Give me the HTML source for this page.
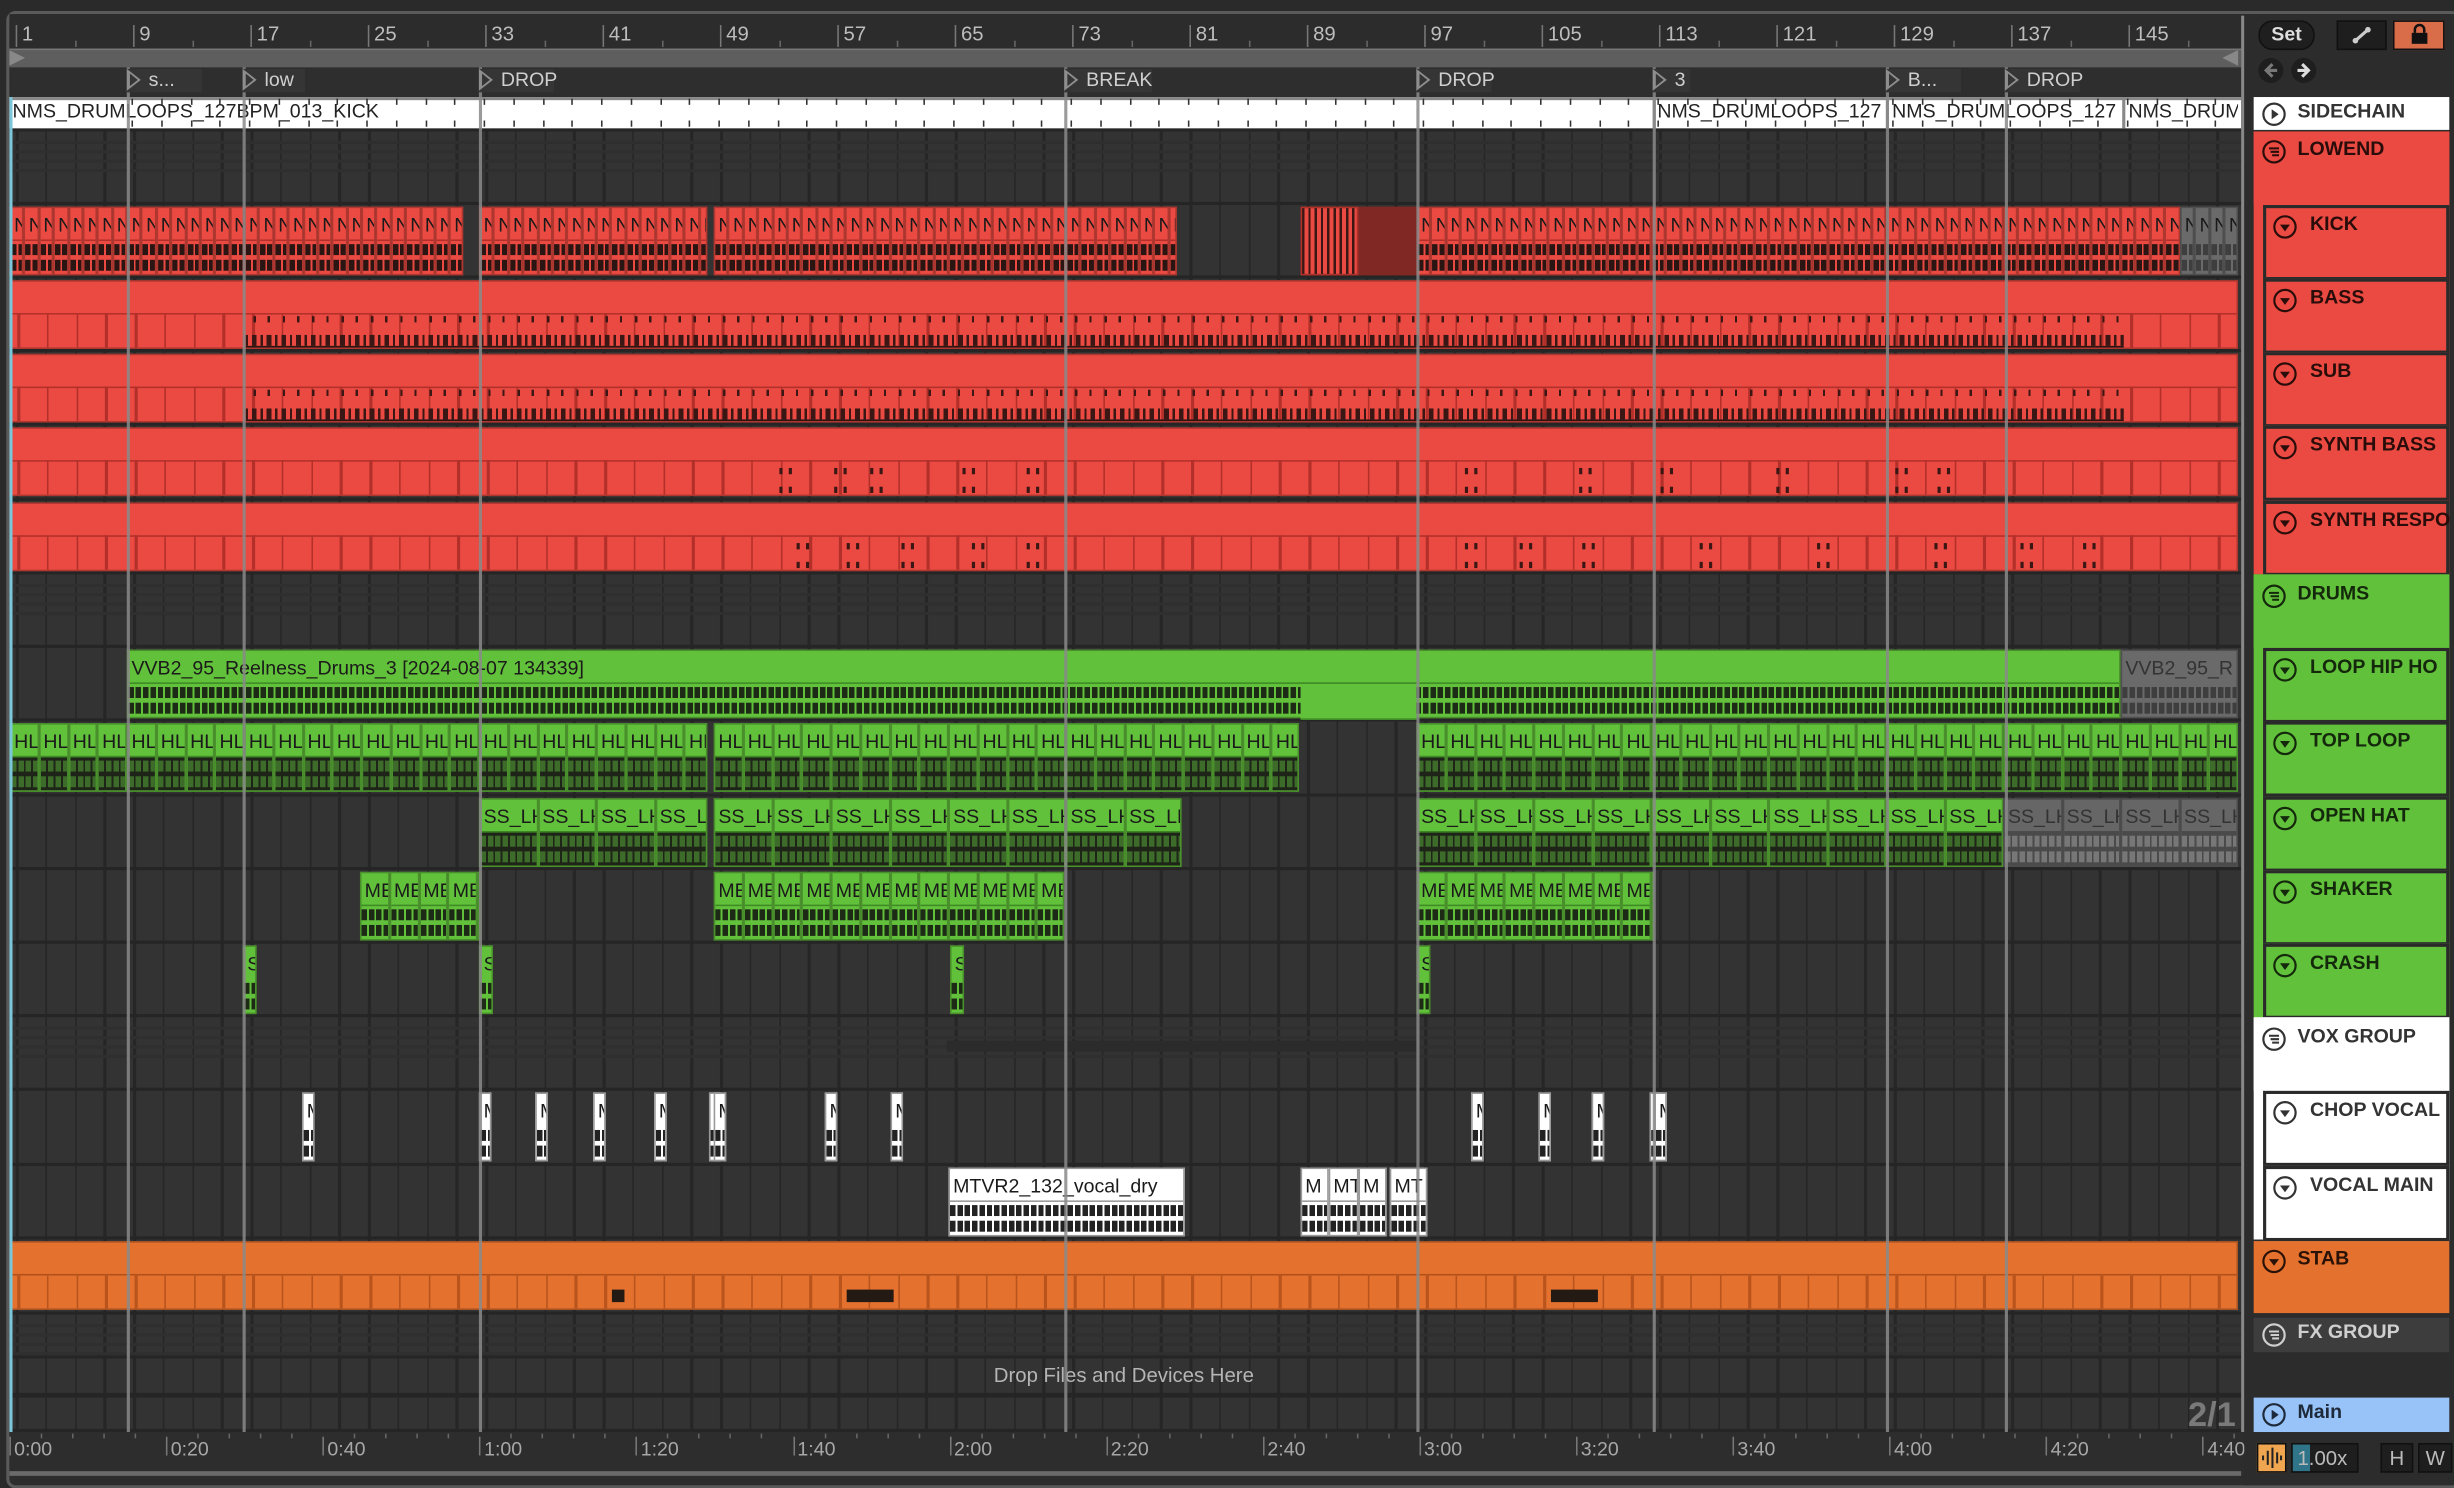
<!DOCTYPE html>
<html><head><meta charset="utf-8">
<style>
html,body{margin:0;padding:0;background:#1f1f1f;overflow:hidden;width:2454px;height:1488px}
#w{position:absolute;left:0;top:0;width:1568px;height:951px;transform:scale(1.56505);transform-origin:0 0;background:#2a2a2a;font-family:"Liberation Sans",sans-serif;overflow:hidden}
.a{position:absolute}
.t{font-family:"Liberation Sans",sans-serif;font-size:12.5px;white-space:nowrap;overflow:hidden}
.hd{font-weight:bold;font-size:12.5px;color:#2a0d0a;white-space:nowrap}
</style></head><body>
<div id="w">
  <div class="a" style="left:4px;top:7px;width:1564px;height:940px;border:2px solid #5a5a5a;border-radius:6px;background:#2d2d2d"></div>
  <div class="a" style="left:6px;top:9px;width:1428px;height:22px;background:#2c2c2c"></div>
  <div class="a" style="left:6px;top:31px;width:1426px;height:11px;background:#5e5e5e;border-top:1px solid #777;border-bottom:1px solid #777"></div>
  <div class="a" style="left:6px;top:43px;width:1426px;height:18px;background:#2e2e2e"></div>
  <div id="arr" class="a" style="left:6px;top:62px;width:1426px;height:853px;background:#333"></div>
  <div id="g" class="a" style="left:0;top:0;width:1568px;height:951px"></div>
  <div class="a" style="left:1434px;top:9px;width:134px;height:940px;background:#2c2c2c"></div>
  <div id="rp" class="a" style="left:0;top:0;width:1568px;height:951px"></div>
</div>
<script>
const g=document.getElementById('g'),rp=document.getElementById('rp');
function el(p,css,html){const d=document.createElement('div');d.className='a';d.style.cssText=css;if(html!==undefined)d.innerHTML=html;p.appendChild(d);return d;}
const X=b=>10+(b-1)*9.375;
for(let x=10;x<1432;x+=18.75){el(g,`left:${x}px;top:84px;width:1.5px;height:831px;background:#262626`);}
for(let b=1;b<=145;b+=8){const x=X(b);el(g,`left:${x}px;top:16px;width:1px;height:14px;background:#777`);el(g,`left:${x+4}px;top:14px;color:#bdbdbd;font-size:13px`,b).className='a t';
 el(g,`left:${x+37.5}px;top:26px;width:1px;height:4px;background:#666`);}
el(g,`left:6px;top:32px;width:0;height:0;border-left:10px solid #888;border-top:5px solid transparent;border-bottom:5px solid transparent`);
el(g,`left:1420px;top:32px;width:0;height:0;border-right:10px solid #888;border-top:5px solid transparent;border-bottom:5px solid transparent`);
const R={lowend:84,kick:131,bass:178,sub:225,sb:272,sr:320,drums:367,loop:414,top:461,open:509,shaker:556,crash:603,vox:650,chop:697,vmain:745,stab:792,fx:840};
for(const k in R){el(g,`left:6px;top:${R[k]-2}px;width:1426px;height:2px;background:#252525`);}
el(g,`left:6px;top:866px;width:1426px;height:2px;background:#252525`);
el(g,`left:6px;top:890px;width:1426px;height:3px;background:#252525`);
el(g,`left:6px;top:913px;width:1426px;height:2px;background:#252525`);
[[84,40],[367,40],[650,40],[840,22]].forEach(([y,h])=>{for(let i=0;i<4;i++)el(g,`left:6px;top:${y+6+i*6}px;width:1426px;height:2px;background:#2f2f2f`);});
el(g,`left:605px;top:665px;width:300px;height:7px;background:#2b2b2b`);
el(g,`left:6px;top:62px;width:1426px;height:20px;background:#fff;border-top:2px solid #888;box-sizing:border-box`);
for(let x=10;x<1432;x+=18.75){el(g,`left:${x+74}px;top:63px;width:1px;height:4px;background:#333`);el(g,`left:${x+74}px;top:77px;width:1px;height:4px;background:#333`);}
[['NMS_DRUMLOOPS_127BPM_013_KICK',8,300],['NMS_DRUMLOOPS_127',1059,145],['NMS_DRUMLOOPS_127',1209,145],['NMS_DRUM',1360,70]].forEach(([s,x,w])=>{const d=el(g,`left:${x}px;top:64px;color:#222;font-size:12.5px;width:${w}px`,s);d.className='a t';});
[1056,1205,1356].forEach(x=>el(g,`left:${x}px;top:62px;width:1.5px;height:20px;background:#888`));

function wave(p,y,h,col){
  el(p,`left:0;top:${y+h*0.12}px;right:0;height:${h*0.3}px;background:repeating-linear-gradient(90deg,${col} 0 3.5px,transparent 3.5px 4.7px)`);
  el(p,`left:0;top:${y+h*0.55}px;right:0;height:${h*0.3}px;background:repeating-linear-gradient(90deg,${col} 0 3.5px,transparent 3.5px 4.7px)`);
}
function clip(x1,x2,y,o){
  const h=o.h||44, hh=o.hh||Math.round(h*0.45);
  const c=el(g,`left:${x1}px;top:${y+1}px;width:${x2-x1}px;height:${h}px;background:${o.bg};box-sizing:border-box;border:1px solid ${o.bd||'rgba(0,0,0,.25)'};overflow:hidden`);
  if(o.label!==undefined){const t=el(c,`left:2px;top:${(hh-15)/2+1}px;color:${o.tc||'#1a1a1a'};font-size:12.5px;width:${x2-x1-3}px`,o.label);t.className='a t';}
  if(o.body)el(c,`left:0;top:${hh}px;right:0;bottom:0;background:${o.body}`);
  if(o.wave)wave(c,hh,h-hh,o.wave);
  if(o.line)el(c,`left:0;top:${hh}px;right:0;height:1px;background:${o.line}`);
  return c;
}
function seg(x1,x2,w,y,o){for(let x=x1;x<x2-0.5;x+=w){clip(x,Math.min(x+w,x2),y,o);}}
const RED='#ea4a41',GRN='#62c13b',ORG='#e5712e';
const kick={bg:RED,label:'N',wave:'#2a1513',line:'#b3302a'};
seg(6,296,9.375,R.kick,kick);seg(306,452,9.375,R.kick,kick);seg(456,752,9.375,R.kick,kick);seg(905,1393,9.375,R.kick,kick);
el(g,`left:831px;top:${R.kick+1}px;width:37px;height:44px;background:repeating-linear-gradient(90deg,#3a1714 0 1.5px,${RED} 1.5px 4px);border:1px solid #b3302a;box-sizing:border-box`);
el(g,`left:868px;top:${R.kick+1}px;width:37px;height:44px;background:#802823`);
seg(1393,1430,9.375,R.kick,{bg:'#6a6a6a',label:'N',wave:'#3e3e3e'});
function midi(y,dense,sparse){
  const c=clip(6,1430,y,{bg:RED,line:'#b3302a'});
  for(let x=10;x<1430;x+=18.75)el(c,`left:${x-6}px;top:20px;width:1.5px;height:24px;background:#b3302a`);
  if(dense){el(c,`left:150px;top:41px;width:1200px;height:2px;background:#2a1513`);
   el(c,`left:150px;top:34px;width:1200px;height:7px;background:repeating-linear-gradient(90deg,#3a1714 0 1.5px,transparent 1.5px 4px,#3a1714 4px 7px,transparent 7px 9.4px)`);
   el(c,`left:150px;top:22px;width:1200px;height:4px;background:repeating-linear-gradient(90deg,transparent 0 5px,#3a1714 5px 6.5px,transparent 6.5px 14px,#3a1714 14px 15.5px,transparent 15.5px 18.75px)`);}
  sparse.forEach(x=>{el(c,`left:${x-6}px;top:25px;width:1.5px;height:4px;background:#3a1714`);el(c,`left:${x}px;top:25px;width:1.5px;height:4px;background:#3a1714`);el(c,`left:${x-6}px;top:37px;width:1.5px;height:4px;background:#3a1714`);el(c,`left:${x}px;top:37px;width:1.5px;height:4px;background:#3a1714`);});
}
midi(R.bass,true,[]);midi(R.sub,true,[]);
midi(R.sb,false,[497,532,555,614,655,935,1008,1060,1134,1210,1237]);
midi(R.sr,false,[508,540,575,620,655,935,970,1010,1085,1160,1235,1290,1330]);
clip(81,1355,R.loop,{bg:GRN,label:'VVB2_95_Reelness_Drums_3 [2024-08-07 134339]',wave:'#1d2a16',line:'#3e8a25'});
el(g,`left:831px;top:${R.loop+22}px;width:74px;height:22px;background:${GRN};border-top:1px solid #3e8a25;border-bottom:1px solid #3e8a25`);
clip(1355,1430,R.loop,{bg:'#6a6a6a',label:'VVB2_95_R',wave:'#3e3e3e',tc:'#333'});
const hl={bg:GRN,label:'HL',body:'#1e2518',wave:'#3c6b2a',line:'#3e8a25'};
seg(6,452,18.75,R.top,hl);seg(456,830,18.75,R.top,hl);seg(905,1430,18.75,R.top,hl);
const ss={bg:GRN,label:'SS_LH',body:'#1e2518',wave:'#3c6b2a',line:'#3e8a25'};
seg(306,452,37.5,R.open,ss);seg(456,755,37.5,R.open,ss);seg(905,1280,37.5,R.open,ss);
seg(1280,1430,37.5,R.open,{bg:'#666',label:'SS_LH',body:'#4a4a4a',wave:'#777',tc:'#333'});
const me={bg:GRN,label:'ME',wave:'#1d2a16',line:'#3e8a25'};
seg(230,306,18.75,R.shaker,me);seg(456,680,18.75,R.shaker,me);seg(905,1056,18.75,R.shaker,me);
[155,306,607,905].forEach(x=>clip(x,x+9,R.crash,{bg:GRN,label:'S',wave:'#1d2a16'}));
[193,306,342,379,418,453,456,527,569,940,983,1017,1054,1057].forEach(x=>clip(x,x+8,R.chop,{bg:'#fff',bd:'#999',label:'M',wave:'#222'}));
clip(606,757,R.vmain,{bg:'#fff',bd:'#999',label:'MTVR2_132_vocal_dry',body:'#fff',wave:'#222',line:'#999'});
[[831,849,'M'],[849,868,'MT'],[868,886,'M'],[888,912,'MT']].forEach(([a,b,l])=>clip(a,b,R.vmain,{bg:'#fff',bd:'#999',label:l,wave:'#222',line:'#999'}));
const st=clip(6,1430,R.stab,{bg:ORG,line:'#b0501a'});
for(let x=10;x<1430;x+=18.75)el(st,`left:${x-6}px;top:20px;width:1.5px;height:24px;background:#b8541c`);
[[390,398],[540,570],[990,1020]].forEach(([a,b])=>el(st,`left:${a-6}px;top:30px;width:${b-a}px;height:8px;background:#231a14`));
el(g,`left:635px;top:871px;color:#b5b5b5;font-size:13px`,'Drop Files and Devices Here').className='a t';
const locs=[[81,'s...'],[155,'low'],[306,'DROP'],[680,'BREAK'],[905,'DROP'],[1056,'3'],[1205,'B...'],[1281,'DROP']];
locs.forEach(([x,l])=>{el(g,`left:${x}px;top:43px;width:1.5px;height:872px;background:#8a8a8a;opacity:.85`);
 el(g,`left:${x}px;top:44px;width:${l.length*8+16}px;height:15px;background:#353535`);
 el(g,`left:${x}px;top:44px;width:0;height:0;border-left:9px solid #8e8e8e;border-top:7px solid transparent;border-bottom:7px solid transparent`);
 el(g,`left:${x+1.5}px;top:47px;width:0;height:0;border-left:5px solid #353535;border-top:4px solid transparent;border-bottom:4px solid transparent`);
 el(g,`left:${x+14}px;top:44px;color:#cfcfcf;font-size:12.5px`,l).className='a t';});
el(g,`left:1432px;top:10px;width:1.5px;height:905px;background:#888`);
el(g,`left:1398px;top:891px;color:#7a7a7a;font-size:22px;font-weight:bold`,'2/1').className='a t';
el(g,`left:6px;top:915px;width:1426px;height:28px;background:#2d2d2d`);
['0:00','0:20','0:40','1:00','1:20','1:40','2:00','2:20','2:40','3:00','3:20','3:40','4:00','4:20','4:40'].forEach((s,i)=>{const x=6+i*100.1;
 el(g,`left:${x}px;top:918px;width:1px;height:12px;background:#777`);el(g,`left:${x+3}px;top:919px;color:#a8a8a8;font-size:12.5px`,s).className='a t';
 for(let j=1;j<5;j++)el(g,`left:${x+j*20}px;top:916px;width:1px;height:3px;background:#666`);});
el(g,`left:6px;top:940px;width:1426px;height:3px;background:#6a6a6a`);
el(g,`left:6px;top:62px;width:2px;height:853px;background:#7cc6d9`);

el(rp,`left:1443px;top:13px;width:34px;height:17px;border-radius:9px;background:#1f1f1f;border:1px solid #111;color:#ddd;font-size:12.5px;font-weight:bold;text-align:center;line-height:17px`,'Set');
el(rp,`left:1493px;top:13px;width:30px;height:17px;background:#1e1e1e;border:1px solid #111`,'<svg width="30" height="17"><line x1="11" y1="12" x2="19" y2="5" stroke="#ccc" stroke-width="2"/><circle cx="11" cy="12" r="1.8" fill="#ccc"/><circle cx="19" cy="5" r="1.8" fill="#ccc"/></svg>');
el(rp,`left:1529px;top:13px;width:31px;height:17px;background:#d96c49;border:1px solid #111`,'<svg width="31" height="17"><rect x="11" y="7" width="10" height="7" fill="#111"/><path d="M13 7 V5 a3 3 0 0 1 6 0 V7" stroke="#111" stroke-width="1.6" fill="none"/></svg>');
[[1451,'M9 4 L5 8 L9 12 M5 8 H12'],[1472,'M7 4 L11 8 L7 12 M4 8 H11']].forEach(([x,d])=>el(rp,`left:${x-8}px;top:37px;width:16px;height:16px;border-radius:50%;background:#1e1e1e`,`<svg width="16" height="16"><path d="${d}" stroke="${x<1460?'#777':'#ddd'}" stroke-width="2" fill="none"/></svg>`));
function icon(type,col){
  const c=`<circle cx="8" cy="8" r="6.8" stroke="${col}" stroke-width="1.4" fill="none"/>`;
  if(type==='play')return `<svg width="16" height="16">${c}<path d="M6.5 4.8 L11 8 L6.5 11.2Z" fill="${col}"/></svg>`;
  if(type==='down')return `<svg width="16" height="16">${c}<path d="M4.8 6.5 L11.2 6.5 L8 10.8Z" fill="${col}"/></svg>`;
  return `<svg width="16" height="16">${c}<path d="M4.8 5.8H11.2M5.8 8H11.2M6.8 10.2H11.2" stroke="${col}" stroke-width="1.3"/></svg>`;
}
function hdr(y,h,bg,txt,tc,type,child,dy){
  const x=child?1446:1440; dy=dy||0;
  const d=el(rp,`left:${x}px;top:${y}px;width:${1565-x}px;height:${h}px;background:${bg};box-sizing:border-box;${child?'border:2px solid #2a2a2a;':''}`);
  el(d,`left:${child?4:5}px;top:${(child?4:3)+dy}px;width:16px;height:16px`,icon(type,tc));
  const t=el(d,`left:28px;top:${(child?3:2)+dy}px;color:${tc};font-weight:bold;font-size:12.5px`,txt);t.className='a hd';t.style.color=tc;
}
const DK='#2a0d0a';
hdr(62,21,'#fff','SIDECHAIN','#333','play',false);
el(rp,`left:1440px;top:84px;width:125px;height:283px;background:#ea4a41`);
hdr(84,47,'#ea4a41','LOWEND',DK,'grp',false,2);
[['KICK',131],['BASS',178],['SUB',225],['SYNTH BASS',272],['SYNTH RESPO',320]].forEach(([n,y])=>hdr(y,48,'#ea4a41',n,DK,'down',true));
el(rp,`left:1440px;top:367px;width:125px;height:283px;background:#62c13b`);
hdr(367,47,'#62c13b','DRUMS','#14280c','grp',false,3);
[['LOOP HIP HO',414],['TOP LOOP',461],['OPEN HAT',509],['SHAKER',556],['CRASH',603]].forEach(([n,y])=>hdr(y,48,'#62c13b',n,'#14280c','down',true));
el(rp,`left:1440px;top:650px;width:125px;height:142px;background:#fff`);
hdr(650,47,'#fff','VOX GROUP','#333','grp',false,3);
[['CHOP VOCAL',697],['VOCAL MAIN',745]].forEach(([n,y])=>hdr(y,48,'#fff',n,'#333','down',true));
hdr(793,46,'#e5712e','STAB','#2a1206','down',false,2);
hdr(842,22,'#3d3d3d','FX GROUP','#cfcfcf','grp',false);
hdr(893,22,'#97c3f8','Main','#1e2a3a','play',false);
el(rp,`left:1442px;top:922px;width:17px;height:17px;background:#f0a550;border:1px solid #111`,'<svg width="17" height="17"><path d="M3 7v3M6 4v9M9 2v13M12 5v7M14.5 7v3" stroke="#222" stroke-width="1.3"/></svg>');
el(rp,`left:1464px;top:922px;width:41px;height:17px;background:#1e1e1e;border:1px solid #111`,'<div style="position:absolute;left:0;top:0;width:11px;height:17px;background:#2f7489"></div><div class="t" style="position:absolute;left:3px;top:1px;color:#bbb;font-size:13px">1.00x</div>');
el(rp,`left:1521px;top:922px;width:19px;height:17px;background:#1e1e1e;border:1px solid #111;color:#bbb;font-size:13px;text-align:center;line-height:17px`,'H');
el(rp,`left:1545px;top:922px;width:20px;height:17px;background:#1e1e1e;border:1px solid #111;color:#bbb;font-size:13px;text-align:center;line-height:17px`,'W');
</script>
</body></html>
